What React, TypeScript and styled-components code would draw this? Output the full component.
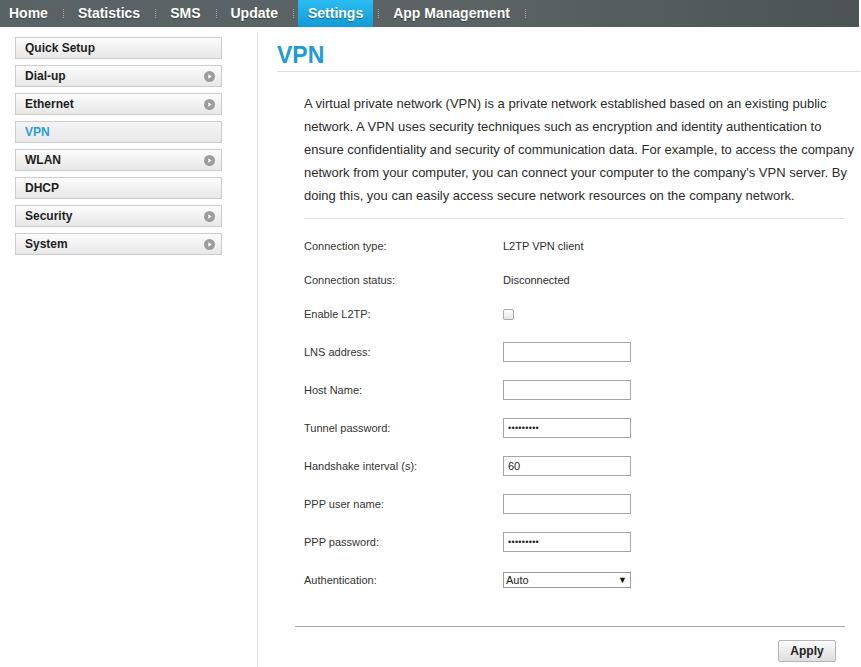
import React from 'react';
import styled, { createGlobalStyle } from 'styled-components';

const GlobalStyle = createGlobalStyle`
  html, body {
    margin: 0;
    padding: 0;
    background: #fff;
  }
  body {
    font-family: "Liberation Sans", Arial, sans-serif;
    color: #333;
  }
`;

const Page = styled.div`
  width: 861px;
  min-height: 667px;
  display: flex;
  flex-direction: column;
`;

/* top menu */
const TopNav = styled.nav`
  width: 859px;
  height: 27px;
  display: flex;
  align-items: center;
  background: linear-gradient(to right, #596264 0%, #5b6365 55%, #4b5355 100%);
`;

const NavItem = styled.a<{ $active?: boolean }>`
  height: 27px;
  line-height: 27px;
  padding: 0 10px;
  font-size: 14px;
  font-weight: bold;
  color: #fff;
  text-decoration: none;
  text-shadow: 0 1px 1px rgba(0, 0, 0, 0.35);
  background: ${(p) =>
    p.$active ? 'linear-gradient(to bottom, #2bbdf2 0%, #129ad6 100%)' : 'transparent'};

  &:first-child {
    padding-left: 9px;
  }
`;

const NavSep = styled.span`
  width: 0;
  height: 9px;
  margin: 0 4px 0 5px;
  border-left: 1px dotted rgba(255, 255, 255, 0.45);
`;

const Main = styled.div`
  flex: 1;
  display: flex;
  margin-top: 5px;
`;

/* left menu */
const Sidebar = styled.aside`
  width: 258px;
  box-sizing: border-box;
  padding: 5px 0 0 15px;
  border-right: 1px solid #e2e2e2;
`;

const SideButton = styled.div<{ $active?: boolean }>`
  width: 207px;
  height: 22px;
  box-sizing: border-box;
  margin-bottom: 6px;
  padding: 0 6px 0 9px;
  display: flex;
  align-items: center;
  justify-content: space-between;
  border: 1px solid #cdcdcd;
  background: ${(p) =>
    p.$active
      ? 'linear-gradient(to bottom, #f4f4f4 0%, #e9e9e9 100%)'
      : 'linear-gradient(to bottom, #fcfcfc 0%, #e7e7e7 100%)'};
  font-size: 12px;
  font-weight: bold;
  color: ${(p) => (p.$active ? '#2a9ed6' : '#1e1e1e')};
`;

const ArrowIcon = () => (
  <svg width="11" height="11" viewBox="0 0 11 11">
    <circle cx="5.5" cy="5.5" r="5.5" fill="#9c9c9c" />
    <path d="M4.3 3.2 L7.6 5.5 L4.3 7.8 Z" fill="#fff" />
  </svg>
);

/* right content */
const Content = styled.section`
  flex: 1;
  padding-left: 19px;
  padding-right: 1px;
`;

const Title = styled.h1`
  margin: 0;
  padding: 9px 0 2px;
  line-height: 28px;
  font-size: 23px;
  font-weight: bold;
  color: #1e9ad6;
  border-bottom: 1px solid #dedede;
`;

const Body = styled.div`
  margin-left: 27px;
  width: 540px;
`;

const Intro = styled.p`
  width: 553px;
  margin: 20px 0 0;
  padding-bottom: 11px;
  font-size: 13px;
  line-height: 23px;
  color: #2b2b2b;
`;

const Form = styled.div`
  padding-top: 3px;
  border-top: 1px solid #dcdcdc;
`;

const Row = styled.div<{ $field?: boolean }>`
  height: 20px;
  margin-top: ${(p) => (p.$field ? 18 : 14)}px;
  display: grid;
  grid-template-columns: 199px 1fr;
  align-items: center;
  font-size: 11px;
  color: #333;
`;

const Value = styled.span`
  color: #2b2b2b;
`;

const Checkbox = styled.span`
  width: 9px;
  height: 9px;
  border: 1px solid #a8a8a8;
  border-radius: 2px;
  background: linear-gradient(to bottom, #fff, #e6e6e6);
`;

const TextInput = styled.input`
  width: 128px;
  height: 20px;
  box-sizing: border-box;
  padding: 0 4px;
  border: 1px solid #a6a6a6;
  font-family: "Liberation Sans", Arial, sans-serif;
  font-size: 11px;
  color: #222;
  outline: none;

  &[type='password'] {
    font-size: 9px;
    letter-spacing: 0.3px;
  }
`;

const SelectWrap = styled.div`
  position: relative;
  width: 128px;
`;

const Select = styled.select`
  width: 128px;
  height: 16px;
  box-sizing: border-box;
  padding: 0 2px;
  appearance: none;
  border: 1px solid #9a9a9a;
  border-radius: 0;
  background: #fff;
  font-family: "Liberation Sans", Arial, sans-serif;
  font-size: 11px;
  color: #222;
`;

const SelectArrow = styled.span`
  position: absolute;
  right: 4px;
  top: 1px;
  font-size: 9px;
  line-height: 14px;
  color: #111;
  pointer-events: none;
`;

const Footer = styled.div`
  margin: 36px 15px 0 18px;
  padding-top: 13px;
  border-top: 1px solid #a9a9a9;
  display: flex;
  justify-content: flex-end;
`;

const ApplyButton = styled.button`
  width: 58px;
  height: 22px;
  margin-right: 9px;
  border: 1px solid #b5b5b5;
  border-radius: 2px;
  background: linear-gradient(to bottom, #fafafa 0%, #dedede 100%);
  font-family: "Liberation Sans", Arial, sans-serif;
  font-size: 12px;
  font-weight: bold;
  color: #222;
`;

const navItems = ['Home', 'Statistics', 'SMS', 'Update', 'Settings', 'App Management'];

const menu = [
  { label: 'Quick Setup', arrow: false },
  { label: 'Dial-up', arrow: true },
  { label: 'Ethernet', arrow: true },
  { label: 'VPN', arrow: false, active: true },
  { label: 'WLAN', arrow: true },
  { label: 'DHCP', arrow: false },
  { label: 'Security', arrow: true },
  { label: 'System', arrow: true },
];

export default function App() {
  return (
    <Page>
      <GlobalStyle />
      <TopNav>
        {navItems.map((item) => (
          <React.Fragment key={item}>
            <NavItem $active={item === 'Settings'}>{item}</NavItem>
            <NavSep />
          </React.Fragment>
        ))}
      </TopNav>

      <Main>
        <Sidebar>
          {menu.map((m) => (
            <SideButton key={m.label} $active={m.active}>
              <span>{m.label}</span>
              {m.arrow && <ArrowIcon />}
            </SideButton>
          ))}
        </Sidebar>

        <Content>
          <Title>VPN</Title>
          <Body>
            <Intro>
              A virtual private network (VPN) is a private network established based on an existing public
              network. A VPN uses security techniques such as encryption and identity authentication to
              ensure confidentiality and security of communication data. For example, to access the company
              network from your computer, you can connect your computer to the company's VPN server. By
              doing this, you can easily access secure network resources on the company network.
            </Intro>

            <Form>
              <Row>
                <span>Connection type:</span>
                <Value>L2TP VPN client</Value>
              </Row>
              <Row>
                <span>Connection status:</span>
                <Value>Disconnected</Value>
              </Row>
              <Row>
                <span>Enable L2TP:</span>
                <Checkbox />
              </Row>
              <Row $field>
                <span>LNS address:</span>
                <TextInput type="text" defaultValue="" />
              </Row>
              <Row $field>
                <span>Host Name:</span>
                <TextInput type="text" defaultValue="" />
              </Row>
              <Row $field>
                <span>Tunnel password:</span>
                <TextInput type="password" defaultValue="123456789" />
              </Row>
              <Row $field>
                <span>Handshake interval (s):</span>
                <TextInput type="text" defaultValue="60" />
              </Row>
              <Row $field>
                <span>PPP user name:</span>
                <TextInput type="text" defaultValue="" />
              </Row>
              <Row $field>
                <span>PPP password:</span>
                <TextInput type="password" defaultValue="123456789" />
              </Row>
              <Row $field>
                <span>Authentication:</span>
                <SelectWrap>
                  <Select defaultValue="auto">
                    <option value="auto">Auto</option>
                    <option value="pap">PAP</option>
                    <option value="chap">CHAP</option>
                  </Select>
                  <SelectArrow>▼</SelectArrow>
                </SelectWrap>
              </Row>
            </Form>
          </Body>
          <Footer>
            <ApplyButton>Apply</ApplyButton>
          </Footer>
        </Content>
      </Main>
    </Page>
  );
}
